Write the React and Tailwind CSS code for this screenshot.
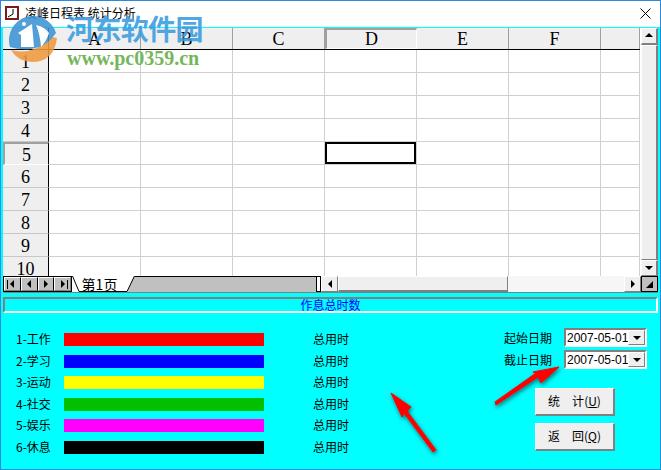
import React from "react";

const columns = ["A", "B", "C", "D", "E", "F", ""];
const rows = [1, 2, 3, 4, 5, 6, 7, 8, 9, 10];
const bars = [
    { label: "1-工作", color: "bg-[#ff0000]", gap: "mt-0" },
    { label: "2-学习", color: "bg-[#0000ff]", gap: "mt-[9px]" },
    { label: "3-运动", color: "bg-[#ffff00]", gap: "mt-[8px]" },
    { label: "4-社交", color: "bg-[#00c000]", gap: "mt-[9px]" },
    { label: "5-娱乐", color: "bg-[#ff00ff]", gap: "mt-[8px]" },
    { label: "6-休息", color: "bg-[#000000]", gap: "mt-[9px]" },
];

const raised = "border border-t-white border-l-white border-r-[#808080] border-b-[#808080] bg-[#efefef]";

const Tri = ({ dir }) => {
    const points = {
        up: "1,6 9,6 5,2",
        down: "1,3 9,3 5,7",
        left: "7,1 7,9 3,5",
        right: "3,1 3,9 7,5",
    };
    return (
        <svg width="10" height="10" viewBox="0 0 10 10">
            <polygon points={points[dir]} fill="#000" />
        </svg>
    );
};

const NavButton = ({ children }) => (
    <div className="w-[17px] h-full bg-[#c0c0c0] border border-t-white border-l-white border-r-black border-b-[#808080] flex items-center justify-center -space-x-px last:border-r-[#808080]">
        {children}
    </div>
);

const Sheet = () => (
    <div className="flex-1 min-w-0 overflow-hidden relative h-[248px] bg-white">
        <div className="grid grid-cols-[46px_repeat(6,92px)_39px] grid-rows-[22px] auto-rows-[23px] font-['Liberation_Serif',serif] text-[18px] leading-none">
            <div className="bg-[#efefef] border-r border-b border-black" />
            {columns.map((c, i) => (
                <div key={i} className="bg-[#efefef] border-b border-black">
                    <div
                        className={`h-full flex items-center justify-center ${
                            c === "D"
                                ? "border-t-2 border-l-2 border-r border-b border-t-[#a0a0a0] border-l-[#a0a0a0] border-r-white border-b-white"
                                : "border-r border-r-[#a0a0a0]"
                        }`}
                    >
                        {c}
                    </div>
                </div>
            ))}
            {rows.map((r) => (
                <React.Fragment key={r}>
                    <div
                        className={`bg-[#efefef] border-r border-r-black flex items-center justify-center pt-[2px] ${
                            r === 5
                                ? "border-t-2 border-l-2 border-b border-t-[#a0a0a0] border-l-[#a0a0a0] border-b-white"
                                : "border-b border-b-[#c8c8c8]"
                        }`}
                    >
                        {r}
                    </div>
                    {columns.map((c, i) => (
                        <div key={i} className="bg-white border-r border-b border-[#d0d0d0]" />
                    ))}
                </React.Fragment>
            ))}
        </div>
        {/* selected cell */}
        <div className="absolute left-[322px] top-[114px] w-[91px] h-[22px] border-2 border-black" />
    </div>
);

const Watermark = () => (
    <div className="absolute left-0 top-0 w-[230px] h-[70px] pointer-events-none">
        <svg className="absolute left-0 top-0" width="70" height="70" viewBox="0 0 70 70">
            <g opacity="0.88">
                <path d="M10 50 Q32 56 51 37 L56 38 Q53 62 31 62 Q16 61 10 50 Z" fill="#f09a3e" />
                <path d="M9 47 A24 24 0 1 1 55 33 Q46 47 30 49 Q18 50 9 47 Z" fill="#3d93d4" />
            </g>
            <path d="M17 33 L31 24 L33 47 L20 47 L20 35 Z" fill="#fff" />
            <circle cx="23" cy="24" r="2" fill="#fff" />
            <path d="M35 25 Q44 27 48 33 Q45 42 40 47 Q39 34 35 25 Z" fill="#fff" />
        </svg>
        <div className="absolute left-[65px] top-[10px] text-[28px] leading-[36px] font-bold text-[#3a9be0]/90 font-['Noto_Sans_CJK_SC',sans-serif] whitespace-nowrap tracking-[-0.6px]">
            河东软件园
        </div>
        <div className="absolute left-[66px] top-[48px] text-[20px] leading-[20px] font-bold text-[#76b65a] font-['Liberation_Serif',serif] whitespace-nowrap">
            www.pc0359.cn
        </div>
    </div>
);

const DateBox = () => (
    <div className="w-[83px] h-[19px] bg-white border-2 border-t-[#808080] border-l-[#808080] border-r-white border-b-white flex items-center">
        <span className="flex-1 pl-[1px] text-[12px] leading-none font-['Liberation_Sans',sans-serif] whitespace-nowrap">
            2007-05-01
        </span>
        <div className={`w-[17px] h-[15px] flex items-center justify-center ${raised}`}>
            <Tri dir="down" />
        </div>
    </div>
);

const ActionButton = ({ first, second, letter }) => (
    <button className={`w-[80px] h-[28px] pb-[2px] ${raised} border-r-2 border-b-2 flex items-center justify-center gap-[12px] text-[12px] leading-none text-black`}>
        <span>{first}</span>
        <span>
            {second}(<span className="underline">{letter}</span>)
        </span>
    </button>
);

const Arrows = () => (
    <svg className="absolute left-0 top-0 pointer-events-none" width="661" height="470" viewBox="0 0 661 470">
        <defs>
            <filter id="arrowShadow" x="-30%" y="-30%" width="160%" height="160%">
                <feDropShadow dx="1" dy="2" stdDeviation="2" floodColor="#000" floodOpacity="0.55" />
            </filter>
        </defs>
        <g filter="url(#arrowShadow)" fill="#ff0000" stroke="#ff0000" strokeLinejoin="round">
            <path d="M390 393 L410 407 L406 411 L435 450 L432 452 L403 413 L401 417 Z" strokeWidth="1" />
            <path d="M558 367 L540 383 L537 377 L495 405 L494 402 L535 373 L532 372 Z" strokeWidth="1" />
        </g>
    </svg>
);

const App = () => {
    return (
        <div className="relative w-[661px] h-[470px] overflow-hidden flex flex-col bg-[#00ffff] border border-[#2a8ae0] border-t-0 font-['Noto_Sans_CJK_SC',sans-serif] text-black">
            <div className="h-[27px] shrink-0 bg-white flex items-center pl-[4px] pr-[9px] pb-[3px] border-t border-[#2a8ae0]">
                <div className="w-[14px] h-[14px] border-2 border-[#7a1c1c] bg-white flex items-center justify-center">
                    <svg width="10" height="10" viewBox="0 0 10 10">
                        <path d="M6 1 L6 6 L1 9" stroke="#000" strokeWidth="1" fill="none" />
                    </svg>
                </div>
                <span className="ml-[6px] text-[12px] leading-none whitespace-nowrap">凌峰日程表 统计分析</span>
                <svg className="ml-auto mt-[2px]" width="11" height="11" viewBox="0 0 11 11">
                    <path d="M0.5 0.5 L10.5 10.5 M10.5 0.5 L0.5 10.5" stroke="#000" strokeWidth="1" />
                </svg>
            </div>

            <div className="flex-1 flex flex-col pl-[2px] pr-[2px]">
                <div className="border-t border-[#00ffff] flex">
                    <Sheet />
                    <div className="w-[17px] h-[248px] flex flex-col bg-[#f4f4f4]">
                        <div className={`h-[17px] flex items-center justify-center ${raised} border-r-2 border-b-2`}>
                            <Tri dir="up" />
                        </div>
                        <div className={`flex-1 ${raised} border-r-2`} />
                        <div className={`h-[16px] flex items-center justify-center ${raised} border-r-2`}>
                            <Tri dir="down" />
                        </div>
                    </div>
                </div>

                <div className="h-[17px] flex items-stretch bg-[#c0c0c0] border-b border-[#808080]">
                    <div className="w-[69px] flex border border-black">
                        <NavButton>
                            <div className="w-px h-[9px] bg-black" />
                            <Tri dir="left" />
                        </NavButton>
                        <NavButton>
                            <Tri dir="left" />
                        </NavButton>
                        <NavButton>
                            <Tri dir="right" />
                        </NavButton>
                        <NavButton>
                            <Tri dir="right" />
                            <div className="w-px h-[9px] bg-black" />
                        </NavButton>
                    </div>
                    <div className="relative w-[63px] bg-white flex items-center justify-center pr-[8px] text-[14px] leading-none">
                        <svg className="absolute left-0 top-0" width="63" height="16" viewBox="0 0 63 16">
                            <polygon points="62,0 63,0 63,16 55,16" fill="#c0c0c0" />
                            <path d="M0.5 0 L7 15.5 L55 15.5 L62.5 0" fill="none" stroke="#000" strokeWidth="1" />
                        </svg>
                        <span className="relative">第1页</span>
                    </div>
                    <div className="w-[181px] bg-[#c0c0c0] border-t border-black" />
                    <div className="w-[5px] bg-white border border-black" />
                    <div className={`w-[17px] flex items-center justify-center ${raised}`}>
                        <Tri dir="left" />
                    </div>
                    <div className={`w-[170px] ${raised} border-b-2`} />
                    <div className="flex-1 bg-[#f6f6f6]" />
                    <div className={`w-[17px] flex items-center justify-center ${raised}`}>
                        <Tri dir="right" />
                    </div>
                    <div className="w-[17px] flex items-center justify-center bg-[#c0c0c0] border border-black">
                        <svg width="9" height="9" viewBox="0 0 9 9">
                            <polygon points="8,1 8,8 1,8" fill="#000" />
                        </svg>
                    </div>
                </div>

                <div className="mt-[4px] h-[16px] border-2 border-t-[#808080] border-l-[#808080] border-r-white border-b-white flex items-center justify-center text-[#0000ff] text-[12px] leading-none">
                    作息总时数
                </div>

                <div className="flex flex-1 relative">
                    <div className="pt-[20px] pl-[13px] flex flex-col">
                        {bars.map((bar) => (
                            <div key={bar.label} className={`h-[13px] flex items-center ${bar.gap}`}>
                                <span className="w-[48px] pb-[2px] text-[12px] leading-none whitespace-nowrap">{bar.label}</span>
                                <div className={`w-[200px] h-[13px] ${bar.color}`} />
                                <span className="ml-[49px] pb-[2px] text-[12px] leading-none whitespace-nowrap">总用时</span>
                            </div>
                        ))}
                    </div>
                    <div className="ml-auto mr-[11px] pt-[15px] flex flex-col items-end">
                        <div className="flex flex-col gap-[3px]">
                            <div className="flex items-center gap-[12px]">
                                <span className="text-[12px] leading-none">起始日期</span>
                                <DateBox />
                            </div>
                            <div className="flex items-center gap-[12px]">
                                <span className="text-[12px] leading-none">截止日期</span>
                                <DateBox />
                            </div>
                        </div>
                        <div className="mt-[19px] mr-[32px] flex flex-col gap-[7px]">
                            <ActionButton first="统" second="计" letter="U" />
                            <ActionButton first="返" second="回" letter="Q" />
                        </div>
                    </div>
                </div>
            </div>

            <Watermark />
            <Arrows />
        </div>
    );
};

export default App;
